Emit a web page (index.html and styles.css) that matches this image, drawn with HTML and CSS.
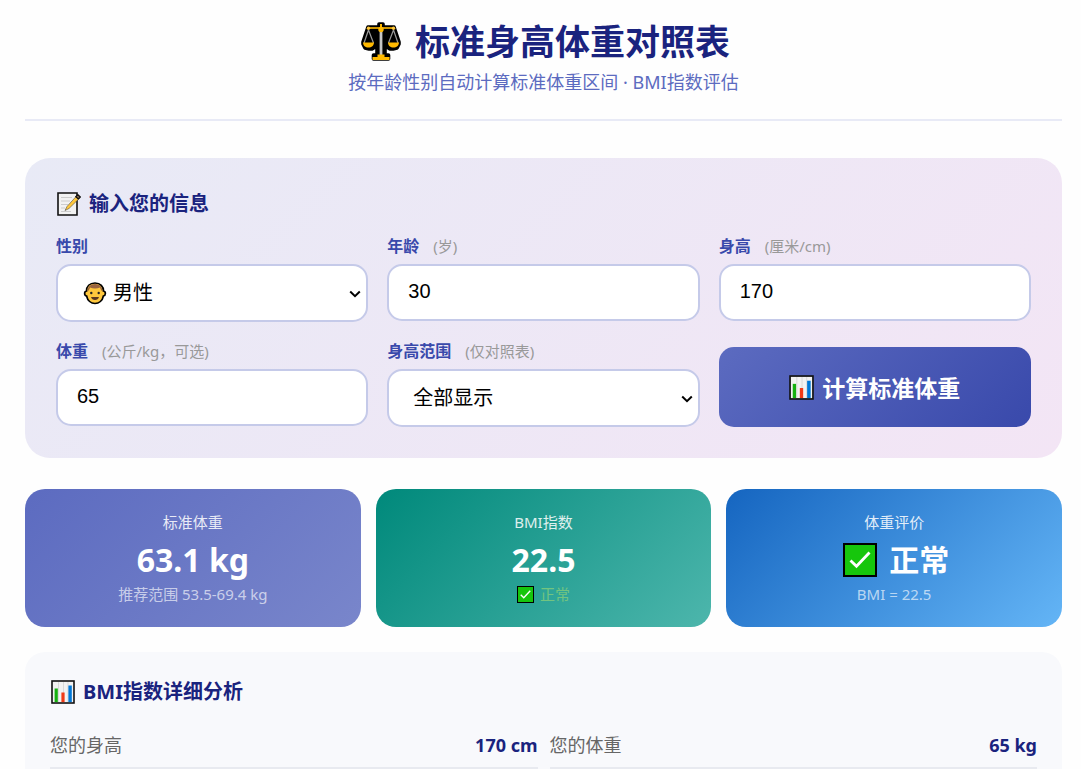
FILE: index.html
```html
<!DOCTYPE html>
<html lang="zh-CN">
<head>
<meta charset="utf-8">
<meta name="viewport" content="width=device-width, initial-scale=1">
<title>标准身高体重对照表</title>
<link rel="stylesheet" href="styles.css">
</head>
<body>
<svg class="sprite" aria-hidden="true">
  <symbol id="i-chart" viewBox="0 0 24 24">
    <rect x="1" y="1" width="22" height="22" fill="#f2f2f2" stroke="#111" stroke-width="1.6"/>
    <path d="M7.5 2v20M12.5 2v20M17 2v20" stroke="#d9d9d9" stroke-width="1"/>
    <rect x="3.6" y="8.5" width="3.2" height="13.6" fill="#16b010"/>
    <rect x="10.4" y="12.5" width="3.2" height="9.6" fill="#f03a17"/>
    <rect x="17.4" y="5.5" width="3.4" height="16.6" fill="#0078d7"/>
  </symbol>
  <symbol id="i-check" viewBox="0 0 34 34">
    <rect x="1" y="1" width="32" height="32" fill="#16c60c" stroke="#000" stroke-width="2"/>
    <path d="M7.5 17.5l6 5.8L26.500 9.500" fill="none" stroke="#fff" stroke-width="2.8"/>
  </symbol>
  <symbol id="i-arrow" viewBox="0 0 12 8">
    <path d="M1.200 1.500L6 6.200l4.800-4.700" fill="none" stroke="#000" stroke-width="2"/>
  </symbol>
</svg>
<main class="page">
  <header class="header">
    <h1 class="header-title">
      <svg class="icon-scale" viewBox="0 0 40 40" aria-hidden="true">
        <path d="M18 2h4v3h11l5 15v2l-2 4-4 1h-3l-3-2-2-3v11h3.500v4h-15v-4H16V22l-2 3-3 2H8l-4-1-2-4v-2L7 5h11z" fill="#000" stroke="#000" stroke-width="3.600" stroke-linejoin="round"/>
        <path d="M7.500 8L3 21M7.500 8l5 13M32.500 8l-5 13M32.500 8L37 21" fill="none" stroke="#999" stroke-width="1.200"/>
        <rect x="18.600" y="8" width="2.800" height="26" fill="#c6c6c6"/>
        <path d="M8 6h24" stroke="#ffb900" stroke-width="1.600"/>
        <circle cx="7.500" cy="6.200" r="1.700" fill="#ffc83d"/>
        <circle cx="32.500" cy="6.200" r="1.700" fill="#ffc83d"/>
        <rect x="19" y="2" width="2" height="4" fill="#ffb900"/>
        <circle cx="20" cy="7.500" r="2.700" fill="#ffb900"/>
        <path d="M2 20.500h11c0 3-2.500 5-5.500 5s-5.500-2-5.500-5zM27 20.500h11c0 3-2.500 5-5.500 5s-5.500-2-5.500-5zM16.500 32.500h7v2.500h5v3h-17v-3h5z" fill="#ffb900"/>
      </svg>
      <span>标准身高体重对照表</span>
    </h1>
    <p class="header-sub">按年龄性别自动计算标准体重区间 · BMI指数评估</p>
  </header>

  <form class="panel">
    <h2 class="section-title">
      <svg class="icon-title" viewBox="0 0 24 24" aria-hidden="true">
        <path d="M1 1h19v22H1z" fill="#f2f2f2" stroke="#111" stroke-width="1.600"/>
        <path d="M4 5.500h11M4 9h9M4 12.500h7M4 16h4M4 19.500h10" stroke="#ccc" stroke-width="1"/>
        <path d="M8 18.500l2-4L20 3.500l2.700 2.500L12 16.500z" fill="#ffc83d" stroke="#333" stroke-width=".5"/>
        <path d="M18.800 4.700l2-2 2.500 2.300-2 2z" fill="#886a4c" stroke="#111" stroke-width="1.200"/>
      </svg>
      <span>输入您的信息</span>
    </h2>
    <div class="fields">
      <div class="field">
        <label class="label" for="gender">性别</label>
        <div class="select-wrap">
          <select class="control control-select with-icon" id="gender"><option>男性</option><option>女性</option></select>
          <svg class="icon-face" viewBox="0 0 24 24" aria-hidden="true">
            <path d="M12 2C6.500 2 3.500 5.500 3.500 10 1 10.500 1 14.500 3.600 15 4.500 19.500 8 22.500 12 22.500s7.500-3 8.400-7.500c2.600-.5 2.600-4.500.1-5C20.500 5.500 17.500 2 12 2z" fill="#ffc83d" stroke="#000" stroke-width="1.700"/>
            <path d="M4.400 10.500C4.400 6 7.500 2.900 12 2.900S19.600 6 19.600 10.500c-1.500-.8-2-2.500-2.600-4-3 1.300-7 1.300-10 0-.6 1.500-1.100 3.200-2.600 4z" fill="#9a6440"/>
            <circle cx="8.300" cy="12" r="1.200" fill="#222"/>
            <circle cx="15.700" cy="12" r="1.200" fill="#222"/>
            <path d="M8 16h8c-.5 2-2 3-4 3s-3.500-1-4-3z" fill="#5a3720"/>
          </svg>
          <svg class="icon-arrow" aria-hidden="true"><use href="#i-arrow"/></svg>
        </div>
      </div>
      <div class="field">
        <label class="label" for="age">年龄<span class="hint">(岁)</span></label>
        <input class="control" id="age" type="number" value="30">
      </div>
      <div class="field">
        <label class="label" for="height">身高<span class="hint">(厘米/cm)</span></label>
        <input class="control" id="height" type="number" value="170">
      </div>
      <div class="field">
        <label class="label" for="weight">体重<span class="hint">(公斤/kg，可选)</span></label>
        <input class="control" id="weight" type="number" value="65">
      </div>
      <div class="field">
        <label class="label" for="range">身高范围<span class="hint">(仅对照表)</span></label>
        <div class="select-wrap">
          <select class="control control-select" id="range"><option>全部显示</option></select>
          <svg class="icon-arrow" aria-hidden="true"><use href="#i-arrow"/></svg>
        </div>
      </div>
      <button class="submit" type="button">
        <svg class="icon-button" aria-hidden="true"><use href="#i-chart"/></svg>
        <span>计算标准体重</span>
      </button>
    </div>
  </form>

  <section class="cards">
    <div class="card card-indigo">
      <div class="card-label">标准体重</div>
      <div class="card-value">63.1 kg</div>
      <div class="card-note">推荐范围 53.5-69.4 kg</div>
    </div>
    <div class="card card-teal">
      <div class="card-label">BMI指数</div>
      <div class="card-value">22.5</div>
      <div class="card-note note-ok"><svg class="icon-check-small" aria-hidden="true"><use href="#i-check"/></svg><span>正常</span></div>
    </div>
    <div class="card card-blue">
      <div class="card-label">体重评价</div>
      <div class="card-value card-verdict"><svg class="icon-check" aria-hidden="true"><use href="#i-check"/></svg><span>正常</span></div>
      <div class="card-note">BMI = 22.5</div>
    </div>
  </section>

  <section class="analysis">
    <h2 class="section-title">
      <svg class="icon-title" aria-hidden="true"><use href="#i-chart"/></svg>
      <span>BMI指数详细分析</span>
    </h2>
    <dl class="facts">
      <div class="fact"><dt>您的身高</dt><dd>170 cm</dd></div>
      <div class="fact"><dt>您的体重</dt><dd>65 kg</dd></div>
    </dl>
  </section>
</main>
</body>
</html>
```
FILE: styles.css
```css
* { box-sizing: border-box; }
html { scrollbar-width: none; }
body {
  margin: 0;
  background: #fefefe;
  font-family: "Noto Sans", "Noto Sans CJK SC", sans-serif;
  color: #333;
}
h1, h2, p, dl, dd { margin: 0; }
.sprite { display: none; }
.page { padding: 16px 19px 0 25px; }

.header {
  padding-bottom: 23px;
  border-bottom: 2px solid #e8eaf6;
  text-align: center;
}
.header-title {
  display: flex;
  justify-content: center;
  align-items: center;
  gap: 14px;
  padding-left: 4px;
  font-size: 35px;
  line-height: 52px;
  color: #1a237e;
}
.icon-scale { width: 40px; height: 40px; }
.header-sub {
  font-size: 18px;
  line-height: 28px;
  color: #5c6bc0;
}

.panel {
  margin-top: 37px;
  padding: 31px;
  border-radius: 25px;
  background: linear-gradient(135deg, #e8eaf6, #f3e5f5);
}
.section-title {
  display: flex;
  align-items: center;
  gap: 8px;
  padding-left: 1px;
  font-size: 20px;
  line-height: 30px;
  color: #1a237e;
}
.icon-title { width: 24px; height: 24px; }
.fields {
  display: grid;
  grid-template-columns: repeat(3, 1fr);
  gap: 18px 19px;
  margin-top: 16px;
}
.label {
  display: flex;
  align-items: center;
  gap: 14px;
  margin-bottom: 7px;
  font-size: 16px;
  font-weight: 600;
  line-height: 22px;
  color: #3949ab;
}
.hint {
  font-size: 15px;
  font-weight: 400;
  color: #999;
}
.select-wrap { position: relative; }
.control {
  display: block;
  width: 100%;
  height: 57px;
  padding: 0 19px 2px;
  border: 2px solid #c5cae9;
  border-radius: 15px;
  background: #fff;
  color: #000;
  font: 20px "Liberation Sans", "Noto Sans CJK SC", sans-serif;
}
.control-select {
  height: 58px;
  padding: 0 24px;
  appearance: none;
}
.with-icon { padding-left: 55px; }
.icon-face {
  position: absolute;
  left: 27px;
  top: 17px;
  width: 24px;
  height: 24px;
  pointer-events: none;
}
.icon-arrow {
  position: absolute;
  right: 7px;
  top: 26px;
  width: 12px;
  height: 8px;
  pointer-events: none;
}
.submit {
  align-self: end;
  display: flex;
  justify-content: center;
  align-items: center;
  gap: 8px;
  height: 80px;
  border: 0;
  border-radius: 15px;
  background: linear-gradient(135deg, #5c6bc0, #3949ab);
  color: #fff;
  font: bold 23px "Noto Sans", "Noto Sans CJK SC", sans-serif;
}
.icon-button { width: 25px; height: 25px; }

.cards {
  display: grid;
  grid-template-columns: repeat(3, 1fr);
  gap: 15px;
  margin-top: 31px;
}
.card {
  padding: 22px;
  border-radius: 20px;
  color: #fff;
  text-align: center;
}
.card-indigo { background: linear-gradient(135deg, #5c6bc0, #7986cb); }
.card-teal { background: linear-gradient(135deg, #00897b, #4db6ac); }
.card-blue { background: linear-gradient(135deg, #1565c0, #64b5f6); }
.card-label {
  font-size: 15px;
  line-height: 22px;
  opacity: .85;
}
.card-value {
  display: flex;
  justify-content: center;
  align-items: center;
  gap: 12px;
  margin: 6px 0 2px;
  font-size: 32px;
  font-weight: 700;
  line-height: 42px;
}
.card-verdict { padding-left: 4px; font-size: 30px; }
.icon-check { width: 34px; height: 34px; }
.card-note {
  font-size: 15px;
  line-height: 22px;
  color: rgba(255, 255, 255, .65);
}
.note-ok {
  display: flex;
  justify-content: center;
  align-items: center;
  gap: 6px;
  color: #72c480;
}
.icon-check-small { width: 17px; height: 17px; }

.analysis {
  margin-top: 25px;
  padding: 25px 25px 32px;
  border-radius: 20px 20px 0 0;
  background: #f8f9fc;
}
.facts {
  display: grid;
  grid-template-columns: repeat(2, 1fr);
  gap: 12px;
  margin-top: 16px;
}
.fact {
  display: flex;
  justify-content: space-between;
  padding: 8px 0;
  border-bottom: 2px solid #e8eaf0;
  font-size: 18px;
  line-height: 28px;
}
.fact dt { color: #666; }
.fact dd { font-weight: 700; color: #1a237e; }
```
